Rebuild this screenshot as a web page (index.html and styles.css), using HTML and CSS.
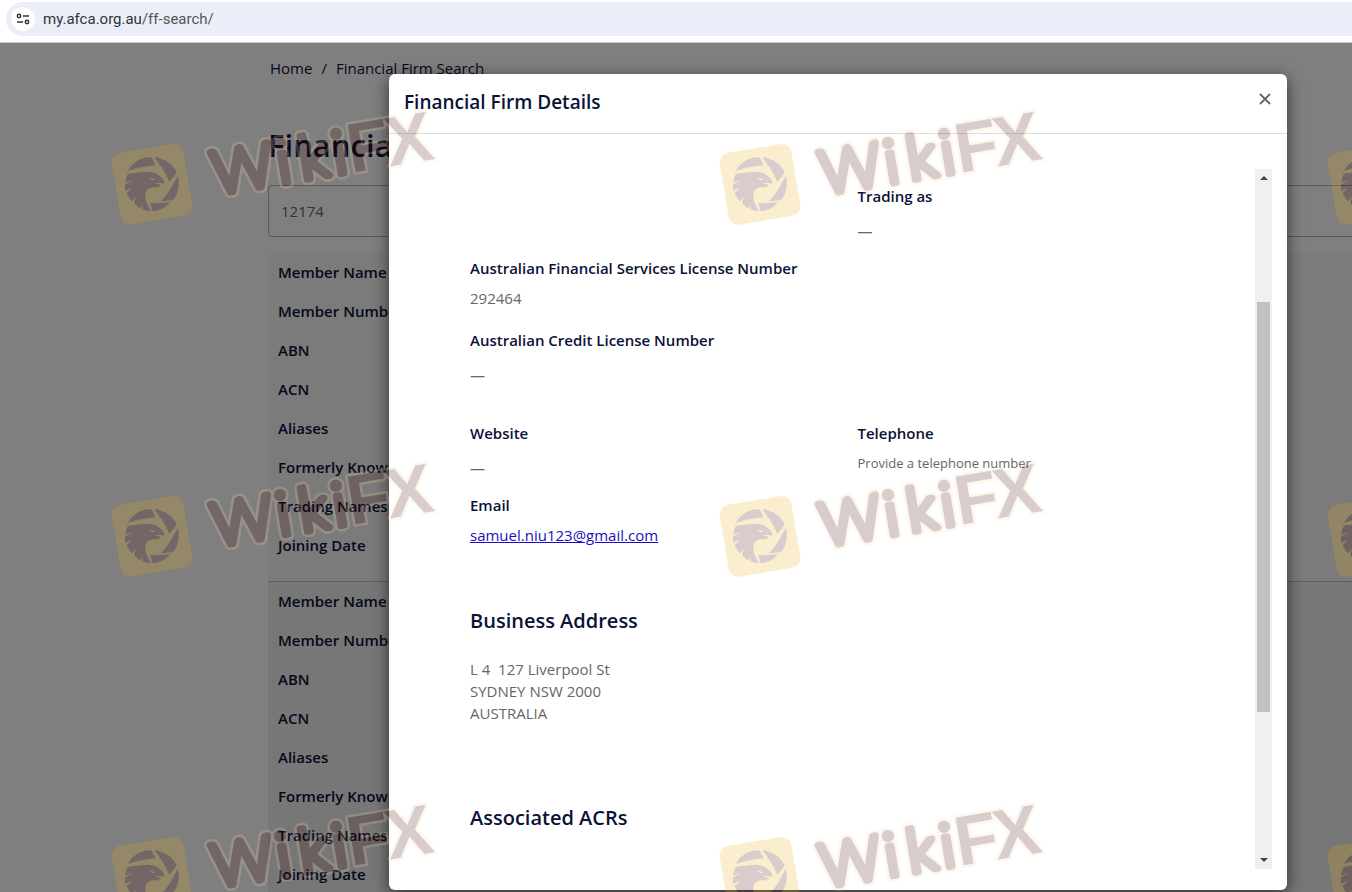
FILE: index.html
```
<!DOCTYPE html>
<html lang="en">
<head>
    <meta charset="UTF-8">
    <meta name="viewport" content="width=device-width, initial-scale=1.0">
    <title>Financial Firm Search</title>
    <link rel="stylesheet" href="styles.css">
</head>
<body>

    <!-- Shared logo mark -->
    <svg class="defs" aria-hidden="true">
        <symbol id="eagle" viewBox="0 0 270 270">
            <rect x="26" y="24" width="218" height="218" rx="30" fill="#ebaf0f" transform="rotate(-9.5 135 133)"/>
            <g fill="#400408">
                <path d="M64 92 C76 66 104 51 133 52 L146 76 C116 78 88 84 64 92Z"/>
                <path d="M142 52 C173 55 198 73 209 98 L187 126 C177 100 160 76 142 52Z"/>
                <path d="M212 107 C220 134 214 160 198 180 L160 184 C178 172 196 138 212 107Z"/>
                <path d="M130 190 L190 187 C176 203 158 212 137 214Z"/>
                <path d="M54 128 C58 112 60 104 64 101 C84 98 104 95 124 95 C140 96 152 102 158 108 C169 115 173 124 170 133 C163 127 153 128 144 130 C148 134 158 133 163 135 C158 141 148 144 137 142 C122 144 114 155 115 169 C116 187 123 199 132 214 C122 214 114 211 108 208 L101 190 L103 206 C95 202 87 196 82 190 L86 170 L76 184 C68 176 63 169 59 160 L76 142 L56 153 C53 145 53 140 54 134 L77 119Z"/>
            </g>
            <path d="M128 113 L146 116 C141 122 133 121 128 113Z" fill="#ebaf0f"/>
        </symbol>
    </svg>

    <header class="address-bar">
        <button class="site-info" type="button" aria-label="View site information">
            <svg width="14" height="14" viewBox="0 0 14 14" fill="none" stroke="#333" stroke-width="1.5">
                <circle cx="3" cy="4" r="1.7"/>
                <path d="M7 4h6M1 10h6"/>
                <circle cx="11" cy="10" r="1.7"/>
            </svg>
        </button>
        <span class="url">my.afca.org.au<span class="path">/ff-search/</span></span>
    </header>

    <div class="page">
        <main class="search">
            <nav class="breadcrumb">
                <a href="#">Home</a><span>/</span><a href="#">Financial Firm Search</a>
            </nav>
            <h1>Financial Firm Search</h1>
            <input class="search-box" type="text" value="12174" aria-label="Search firms">

            <ul class="result">
                <li>Member Name</li>
                <li>Member Number</li>
                <li>ABN</li>
                <li>ACN</li>
                <li>Aliases</li>
                <li>Formerly Known As</li>
                <li>Trading Names</li>
                <li>Joining Date</li>
            </ul>
            <ul class="result alt">
                <li>Member Name</li>
                <li>Member Number</li>
                <li>ABN</li>
                <li>ACN</li>
                <li>Aliases</li>
                <li>Formerly Known As</li>
                <li>Trading Names</li>
                <li>Joining Date</li>
            </ul>
        </main>

        <div class="backdrop"></div>

        <div class="modal" role="dialog" aria-labelledby="modal-title">
            <div class="modal-header">
                <h2 id="modal-title">Financial Firm Details</h2>
                <button class="close" type="button" aria-label="Close">
                    <svg width="12" height="12" viewBox="0 0 12 12" stroke="#666" stroke-width="1.8">
                        <path d="M1 1l10 10M11 1L1 11"/>
                    </svg>
                </button>
            </div>
            <div class="modal-body">
                <div class="details">
                    <div class="fields">
                        <div class="field second">
                            <h3>Trading as</h3>
                            <p class="empty">—</p>
                        </div>
                        <div class="field">
                            <h3>Australian Financial Services License Number</h3>
                            <p>292464</p>
                        </div>
                        <div class="field first">
                            <h3>Australian Credit License Number</h3>
                            <p class="empty">—</p>
                        </div>
                    </div>
                    <div class="fields">
                        <div class="field">
                            <h3>Website</h3>
                            <p class="empty">—</p>
                        </div>
                        <div class="field">
                            <h3>Telephone</h3>
                            <p class="hint">Provide a telephone number</p>
                        </div>
                        <div class="field">
                            <h3>Email</h3>
                            <p><a class="email" href="mailto:samuel.niu123@gmail.com">samuel.niu123@gmail.com</a></p>
                        </div>
                    </div>
                    <section class="address">
                        <h2>Business Address</h2>
                        <p>L 4 &nbsp;127 Liverpool St<br>SYDNEY NSW 2000<br>AUSTRALIA</p>
                    </section>
                    <section class="acrs">
                        <h2>Associated ACRs</h2>
                    </section>
                </div>
                <div class="scrollbar">
                    <button type="button" aria-label="Scroll up"><svg width="8" height="4" viewBox="0 0 8 4"><path d="M0 4L4 0L8 4Z" fill="#444"/></svg></button>
                    <div class="track"><div class="thumb"></div></div>
                    <button type="button" aria-label="Scroll down"><svg width="8" height="4" viewBox="0 0 8 4"><path d="M0 0L4 4L8 0Z" fill="#444"/></svg></button>
                </div>
            </div>
        </div>
    </div>

    <div class="watermarks" aria-hidden="true"></div>

    <script>
        // Repeat the watermark over the window, the last column only has room for the logo
        const watermarks = document.querySelector('.watermarks');
        const letters = `
            <text class="round" x="109 174 197 231" y="95">Wiki</text>
            <text x="246 285" y="96">FX</text>
        `;
        const wordmark = `<g class="halo">${letters}</g><g class="wordmark">${letters}</g>`;
        for (let i = 0; i < 9; i++) {
            watermarks.innerHTML += `
                <svg class="mark" width="350" height="140" viewBox="0 0 350 140">
                    <use href="#eagle" x="0" y="40" width="90" height="90"/>
                    <g transform="rotate(-9.5 106 96)">${i % 3 < 2 ? wordmark : ''}</g>
                </svg>
            `;
        }
    </script>

</body>
</html>
```

FILE: styles.css
```
* {
    box-sizing: border-box;
}
body {
    font-family: "Open Sans", "Noto Sans", sans-serif;
    font-size: 15px;
    line-height: 24px;
    margin: 0;
    height: 100vh;
    display: flex;
    flex-direction: column;
    overflow: hidden;
    position: relative;
    background: #fff;
    color: #0b1238;
}
h1, h2, h3, p, ul {
    margin: 0;
    padding: 0;
}
button {
    border: 0;
    padding: 0;
    background: none;
    cursor: pointer;
    display: flex;
    align-items: center;
    justify-content: center;
}
.defs {
    position: absolute;
    width: 0;
    height: 0;
}

/* Browser bar */
.address-bar {
    display: flex;
    align-items: center;
    gap: 8px;
    height: 34px;
    margin: 2px 0 6px 6px;
    padding-left: 5px;
    border-radius: 17px 0 0 17px;
    background: #ebeef8;
    flex: none;
}
.site-info {
    width: 24px;
    height: 24px;
    border-radius: 50%;
    background: #fff;
}
.url {
    font-family: Roboto, sans-serif;
    font-size: 15px;
    color: #333;
}
.path {
    color: #555;
}

/* Search page */
.page {
    flex: 1;
    min-height: 0;
    position: relative;
    border-top: 1px solid #c4c6c4;
    overflow: hidden;
}
.search {
    margin-left: 268px;
}
.breadcrumb {
    display: flex;
    gap: 9px;
    padding: 13px 2px 0;
}
.breadcrumb a {
    color: inherit;
    text-decoration: none;
}
h1 {
    font-size: 31px;
    font-weight: 600;
    line-height: 44px;
    margin: 43px 0 18px;
}
.search-box {
    display: block;
    width: 100%;
    height: 52px;
    padding: 0 12px;
    border: 1px solid #b4b4b4;
    border-right: 0;
    border-radius: 4px 0 0 4px;
    background: #fff;
    font: inherit;
    color: #666;
}
.result {
    list-style: none;
    margin-top: 16px;
    padding: 0 10px 16px;
    background: #f6f6f6;
    border-bottom: 1px solid #bbb;
    font-weight: 600;
}
.result li {
    line-height: 39px;
}
.result.alt {
    margin-top: 0;
    background: #eee;
}
.backdrop {
    position: absolute;
    inset: 0;
    background: rgba(0, 0, 0, 0.5);
}

/* Firm details dialog */
.modal {
    position: absolute;
    top: 31px;
    right: 65px;
    bottom: 2px;
    left: 389px;
    display: flex;
    flex-direction: column;
    background: #fff;
    border-radius: 6px;
    box-shadow: 0 4px 16px rgba(0, 0, 0, 0.6);
}
.modal-header {
    display: flex;
    justify-content: space-between;
    height: 60px;
    padding: 14px 16px 0 15px;
    border-bottom: 1px solid #ddd;
    flex: none;
}
.modal h2 {
    font-size: 20px;
    font-weight: 600;
    line-height: 28px;
}
.modal-header h2 {
    font-size: 19px;
}
.close {
    width: 13px;
    height: 22px;
}
.modal-body {
    flex: 1;
    min-height: 0;
    display: flex;
    justify-content: space-between;
    padding: 35px 15px 21px 81px;
}
.details {
    flex: 1;
    padding-top: 15px;
    overflow: hidden;
}
.fields {
    display: grid;
    grid-template-columns: 1fr 1fr;
    padding-right: 10px;
    margin-bottom: 21px;
}
.field {
    height: 72px;
    white-space: nowrap;
}
.field.first {
    grid-column: 1;
}
.field.second {
    grid-column: 2;
}
.field h3 {
    font-size: 15px;
    font-weight: 600;
    margin-bottom: 6px;
}
.field p {
    color: #666;
}
.field .empty {
    padding-top: 5px;
}
.field .hint {
    font-size: 13px;
}
.email {
    color: #1a0dc0;
}
.address {
    margin-top: 42px;
}
.address p {
    margin-top: 23px;
    line-height: 22px;
    color: #666;
}
.acrs {
    margin-top: 80px;
}
.scrollbar {
    display: flex;
    flex-direction: column;
    width: 17px;
    background: #f0f0f0;
}
.scrollbar button {
    height: 18px;
}
.track {
    flex: 1;
    padding: 115px 2px 0;
}
.thumb {
    height: 410px;
    background: #c1c1c1;
}

/* Watermark layer */
.watermarks {
    position: absolute;
    inset: 0;
    display: grid;
    grid-template-columns: repeat(3, 608px);
    grid-template-rows: 352px 341px 341px;
    padding: 100px 0 0 107px;
    overflow: hidden;
    pointer-events: none;
}
.mark {
    opacity: 0.2;
}
.mark text {
    font-family: "Liberation Sans", Arial, sans-serif;
    font-size: 70px;
    font-weight: 700;
    stroke-linejoin: round;
}
.mark .round {
    font-family: Lato, sans-serif;
    font-size: 60px;
    font-weight: 300;
}
.halo {
    fill: #f8e0b0;
    stroke: #f8e0b0;
    stroke-width: 5;
}
.halo .round {
    stroke-width: 12;
}
.wordmark {
    fill: #400408;
}
.wordmark .round {
    stroke: #400408;
    stroke-width: 7;
}
```
